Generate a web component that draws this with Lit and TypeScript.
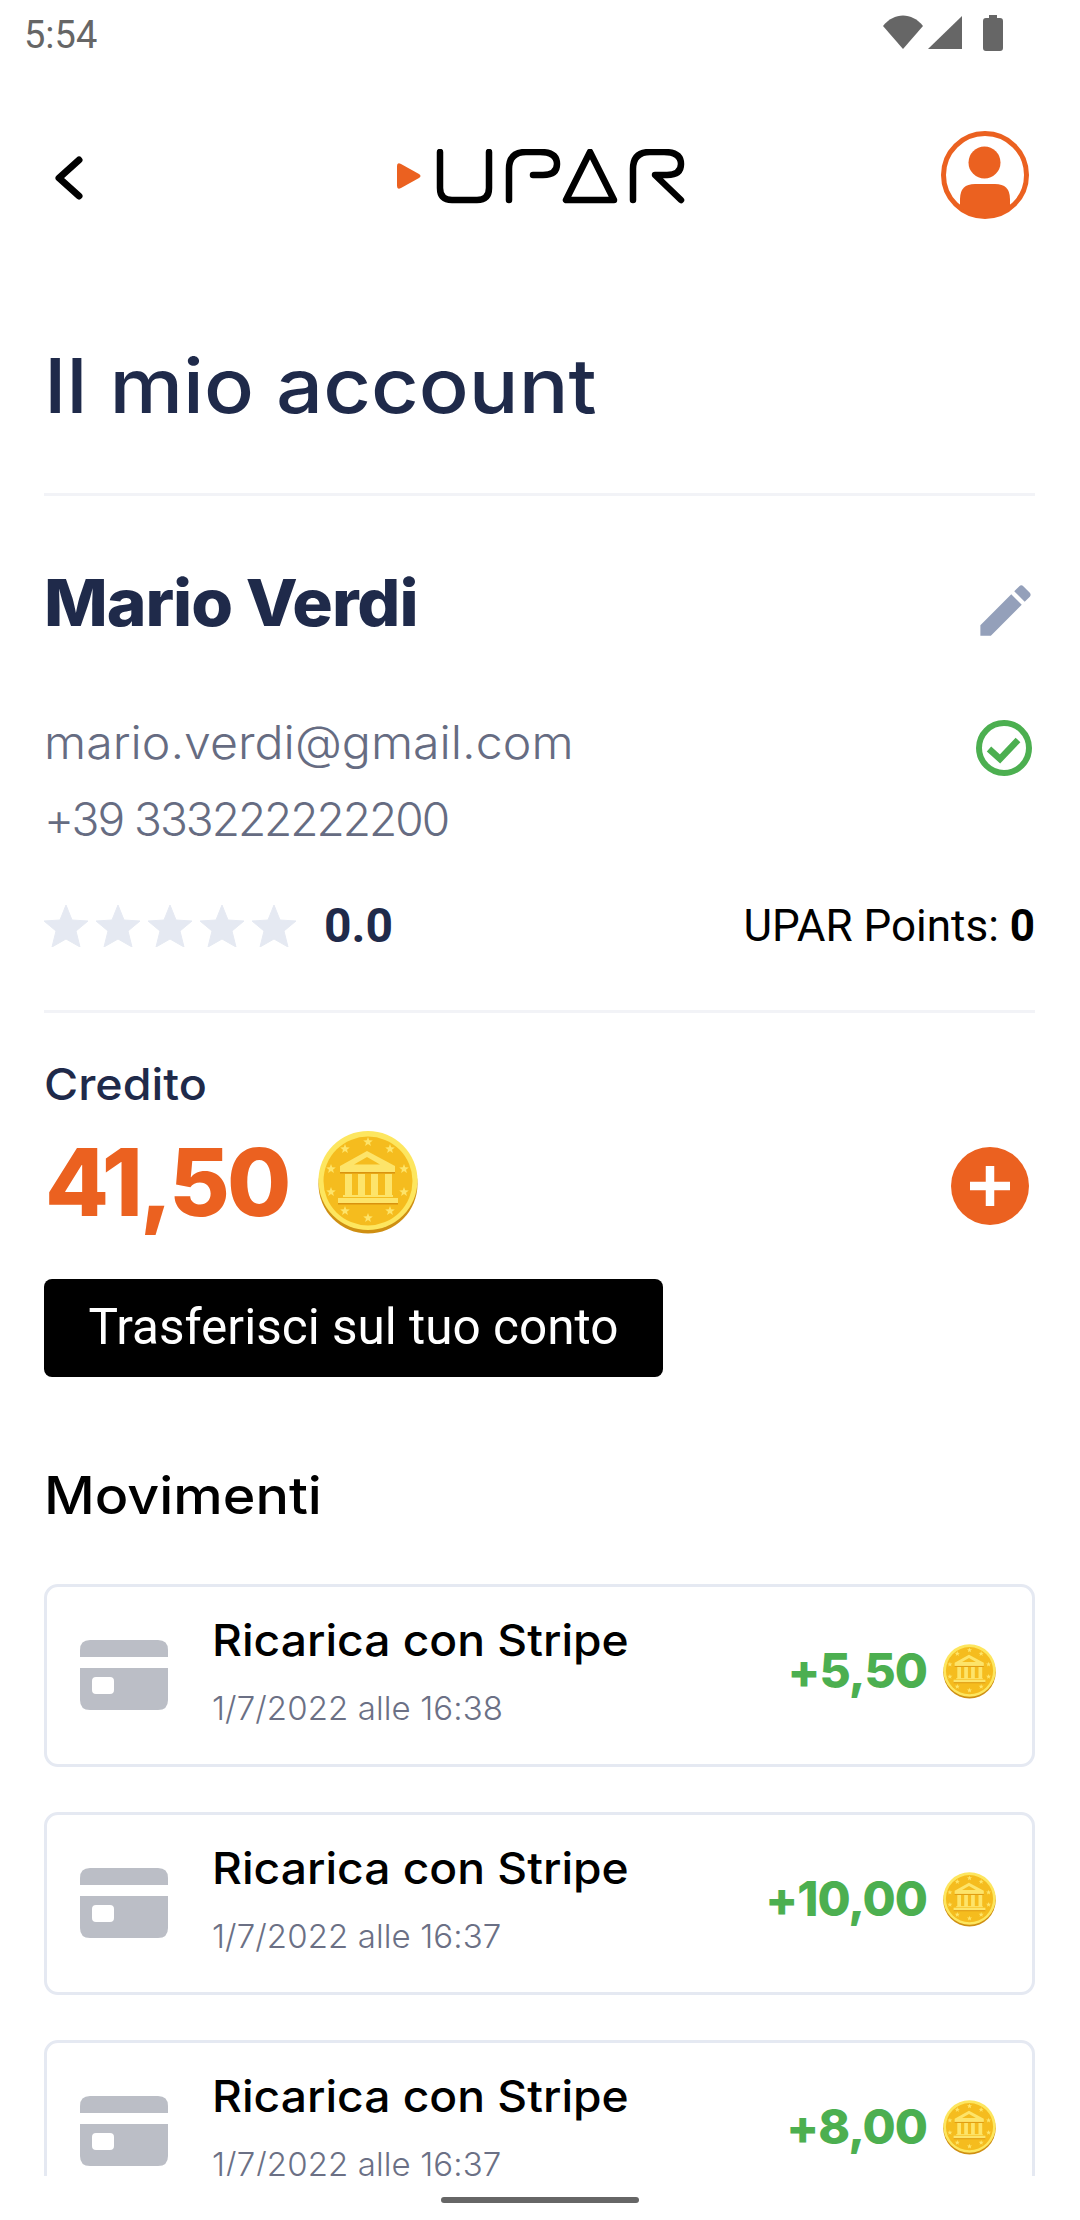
import { LitElement, html, css, svg } from "lit";
import { customElement } from "lit/decorators.js";

const starPts = (cx: number, cy: number, r: number) => {
  const p: string[] = [];
  for (let i = 0; i < 10; i++) {
    const a = -Math.PI / 2 + (i * Math.PI) / 5;
    const q = i % 2 ? r * 0.42 : r;
    p.push(`${(cx + q * Math.cos(a)).toFixed(2)},${(cy + q * Math.sin(a)).toFixed(2)}`);
  }
  return p.join(" ");
};

const coinStars: [number, number][] = [[50, 11], [27, 18], [72, 18], [13, 38], [86, 38], [13, 61], [86, 61], [27, 80], [72, 80], [50, 87]];

const coin = (cls: string) => html`<svg class=${cls} viewBox="0 0 100 103">
  <circle cx="50" cy="53" r="49.5" fill="#cf8f12"></circle>
  <circle cx="50" cy="49.5" r="49.5" fill="#fde65f"></circle>
  <circle cx="50" cy="50" r="44.5" fill="#f5bc1e"></circle>
  ${coinStars.map(([x, y]) => svg`<polygon points=${starPts(x, y, 5)} fill="#fde46a"></polygon>`)}
  <path d="M49 20 L22 35 V41 H77 V35 Z" fill="#fde46a"></path>
  <path d="M49 26 L36 33.5 H62 Z" fill="#f5bc1e"></path>
  <rect x="22" y="41" width="55" height="1.5" fill="#d9920f"></rect>
  <g fill="#fde46a">
    <rect x="27" y="43" width="7" height="22"></rect>
    <rect x="40" y="43" width="7" height="22"></rect>
    <rect x="53" y="43" width="7" height="22"></rect>
    <rect x="67" y="43" width="7" height="22"></rect>
    <rect x="25" y="64" width="50" height="2"></rect>
    <rect x="20" y="67" width="60" height="5"></rect>
  </g>
  <rect x="20" y="72" width="60" height="1.5" fill="#d9920f"></rect>
</svg>`;

interface Move { amount: string; date: string; }

@customElement("app-root")
export class AppRoot extends LitElement {
  static styles = css`
    :host { display: block; width: 1080px; height: 2220px; background: #fff; overflow: hidden; font-family: "Inter", "Liberation Sans", sans-serif; }
    .screen { height: 2176px; overflow: hidden; display: flex; flex-direction: column; }
    .status { height: 60px; flex: none; display: flex; align-items: center; justify-content: space-between; padding: 0 77px 0 24px; box-sizing: border-box; color: #666; }
    .time { font: 400 38px/1 "Roboto", sans-serif; margin-top: 9px; }
    .status-icons { display: block; width: 120px; height: 36px; margin-top: 6px; }
    .header { height: 230px; flex: none; display: flex; align-items: center; justify-content: space-between; padding: 0 51px 0 55px; box-sizing: border-box; position: relative; }
    .chev { width: 28px; height: 44px; display: block; margin-top: 6px; }
    .logo { width: 288px; height: 55px; display: block; position: absolute; left: 397px; top: 89px; }
    .avatar { width: 88px; height: 88px; display: block; }
    .body { padding: 0 45px 0 44px; display: flex; flex-direction: column; flex: none; }
    .wide { display: inline-block; transform-origin: left center; white-space: nowrap; }
    .title { height: 203px; flex: none; font-weight: 500; font-size: 76px; line-height: 190px; color: #1f2a4a; transform: scaleX(1.09); }
    .rule { height: 3px; flex: none; background: #f2f3f7; }
    .name-row { height: 207px; display: flex; justify-content: space-between; align-items: center; flex: none; }
    .name { font-weight: 800; font-size: 65px; line-height: 1; color: #1f2a4a; margin-top: 5px; letter-spacing: -1px; transform: scaleX(1.04); }
    .edit { width: 67px; height: 67px; display: block; margin: 21px -4px 0 0; }
    .contact { height: 77px; display: flex; justify-content: space-between; align-items: center; flex: none; font-size: 46px; font-weight: 300; color: #666c82; }
    .email { transform: scaleX(1.05); }
    .phone { letter-spacing: -2px; }
    .check { width: 56px; height: 56px; display: block; margin: 12px 3px 0 0; }
    .meta { height: 153px; display: flex; align-items: center; flex: none; padding-bottom: 15px; box-sizing: border-box; }
    .stars { display: flex; gap: 8px; }
    .star { width: 44px; height: 42px; display: block; }
    .score { font: 700 48px/1 "Roboto", sans-serif; color: #1f2a4a; margin-left: 28px; }
    .points { font: 400 44px/1 "Roboto", sans-serif; color: #000; margin-left: auto; }
    .points b { font-weight: 700; }
    .credit-label { height: 78px; margin-top: 32px; flex: none; font-weight: 500; font-size: 44px; line-height: 78px; color: #1f2a4a; transform: scaleX(1.06); }
    .credit { height: 118px; display: flex; align-items: center; flex: none; }
    .credit-value { font-weight: 800; font-size: 93px; line-height: 1; color: #eb6120; letter-spacing: -3px; margin-left: 1px; }
    .coin-big { width: 100px; height: 103px; display: block; margin-left: 30px; }
    .plus { width: 78px; height: 78px; display: block; margin: 8px 6px 0 auto; }
    .btn { width: 619px; height: 98px; flex: none; margin-top: 38px; background: #000; color: #fff; border-radius: 8px; display: flex; align-items: center; justify-content: center; font: 400 49.5px/1 "Roboto", sans-serif; }
    .section { height: 207px; flex: none; padding-top: 30px; box-sizing: border-box; display: flex; align-items: center; color: #000; }
    .section span { font-weight: 500; font-size: 52px; line-height: 1; transform: scaleX(1.07); }
    .cards { display: flex; flex-direction: column; gap: 45px; }
    .card { height: 183px; flex: none; box-sizing: border-box; border: 3px solid #e5e9f2; border-radius: 14px; display: flex; align-items: center; padding: 0 36px 0 33px; }
    .card-icon { width: 88px; height: 70px; display: block; flex: none; margin-bottom: 2px; }
    .card-text { margin: 0 0 10px 44px; display: flex; flex-direction: column; flex: 1; }
    .card-title { font-weight: 500; font-size: 44px; line-height: 60px; color: #000; transform: scaleX(1.05); align-self: flex-start; }
    .card-date { font-weight: 300; font-size: 33px; line-height: 48px; margin-top: 14px; color: #6b7085; letter-spacing: 0.1px; }
    .amount { font-weight: 800; font-size: 48px; line-height: 1; color: #4caf50; letter-spacing: -1px; margin-bottom: 10px; }
    .coin-small { width: 53px; height: 55px; display: block; margin: 0 0 8px 16px; flex: none; }
    .home { height: 44px; flex: none; display: flex; justify-content: center; padding-top: 21px; box-sizing: border-box; }
    .home span { display: block; width: 198px; height: 6px; border-radius: 3px; background: #666; }
  `;

  private moves: Move[] = [
    { amount: "+5,50", date: "1/7/2022 alle 16:38" },
    { amount: "+10,00", date: "1/7/2022 alle 16:37" },
    { amount: "+8,00", date: "1/7/2022 alle 16:37" },
  ];

  render() {
    return html`
      <div class="screen">
        <div class="status">
          <span class="time">5:54</span>
          <svg class="status-icons" viewBox="0 0 120 36" fill="#666">
            <path d="M0 11 C11 -3 29 -3 40 11 L20 34 Z"></path>
            <path d="M79 1 V34 H45 Z"></path>
            <path d="M106 0 h8 v3 h3 q3 0 3 3 v27 q0 3 -3 3 h-14 q-3 0 -3 -3 V6 q0 -3 3 -3 h3 Z"></path>
          </svg>
        </div>
        <div class="header">
          <svg class="chev" viewBox="0 0 28 44" fill="none" stroke="#000" stroke-width="7" stroke-linecap="round" stroke-linejoin="round"><path d="M24 4 L4 22 L24 40"></path></svg>
          <svg class="logo" viewBox="0 0 288 55" fill="none" stroke="#000" stroke-width="6.5" stroke-linecap="round" stroke-linejoin="round">
            <path d="M0 17 Q0 13 4 15 L22 25 Q25 27 22 29 L4 39 Q0 41 0 37 Z" fill="#eb6120" stroke="none"></path>
            <path d="M43 3 V39 Q43 51 55 51 H80 Q92 51 92 39 V3"></path>
            <path d="M112 51 V20 Q112 3 129 3 H143 Q160 3 160 15 Q160 26 146 26 H136"></path>
            <path d="M193 3 L169 51 H217 Z"></path>
            <path d="M236 51 V20 Q236 3 253 3 H267 Q284 3 284 15 Q284 26 270 26 H258 L284 51"></path>
          </svg>
          <svg class="avatar" viewBox="0 0 88 88">
            <circle cx="44" cy="44" r="41.5" fill="#fff" stroke="#eb6120" stroke-width="5"></circle>
            <circle cx="43.5" cy="31.5" r="16" fill="#eb6120"></circle>
            <path d="M19 77 V68 Q19 53 34 53 H54 Q69 53 69 68 V77 A41.5 41.5 0 0 1 19 77 Z" fill="#eb6120"></path>
          </svg>
        </div>
        <div class="body">
          <div class="title wide">Il mio account</div>
          <div class="rule"></div>
          <div class="name-row">
            <span class="name wide">Mario Verdi</span>
            <svg class="edit" viewBox="0 0 24 24" fill="#94a0ba"><path d="M3 17.25V21h3.75L17.81 9.94l-3.75-3.75L3 17.25zM20.71 7.04c.39-.39.39-1.02 0-1.41l-2.34-2.34c-.39-.39-1.02-.39-1.41 0l-1.83 1.83 3.75 3.75 1.83-1.83z"></path></svg>
          </div>
          <div class="contact">
            <span class="email wide">mario.verdi@gmail.com</span>
            <svg class="check" viewBox="0 0 56 56" fill="none" stroke="#4caf50" stroke-width="6"><circle cx="28" cy="28" r="25"></circle><path d="M13 29 L24 39 L42 20" stroke-width="6.5"></path></svg>
          </div>
          <div class="contact"><span class="phone">+39 333222222200</span></div>
          <div class="meta">
            <div class="stars">
              ${[0, 1, 2, 3, 4].map(() => html`<svg class="star" viewBox="0 0 44 42"><polygon points="22,0 28,15 44,16 32,26 36,42 22,34 8,42 12,26 0,16 16,15" fill="#e5e9f2" stroke="#e5e9f2" stroke-width="1" stroke-linejoin="round"></polygon></svg>`)}
            </div>
            <span class="score">0.0</span>
            <span class="points">UPAR Points: <b>0</b></span>
          </div>
          <div class="rule"></div>
          <div class="credit-label wide">Credito</div>
          <div class="credit">
            <span class="credit-value">41,50</span>
            ${coin("coin-big")}
            <svg class="plus" viewBox="0 0 78 78"><circle cx="39" cy="39" r="39" fill="#eb6120"></circle><path d="M39 19 V59 M19 39 H59" stroke="#fff" stroke-width="8.5"></path></svg>
          </div>
          <div class="btn">Trasferisci sul tuo conto</div>
          <div class="section"><span class="wide">Movimenti</span></div>
          <div class="cards">
            ${this.moves.map((m) => html`
              <div class="card">
                <svg class="card-icon" viewBox="0 0 88 70" fill="#bbbec6">
                  <path d="M0 17 V10 Q0 0 10 0 H78 Q88 0 88 10 V17 Z"></path>
                  <path fill-rule="evenodd" d="M0 28 H88 V60 Q88 70 78 70 H10 Q0 70 0 60 Z M16 37 Q12 37 12 41 V50 Q12 54 16 54 H30 Q34 54 34 50 V41 Q34 37 30 37 Z"></path>
                </svg>
                <div class="card-text">
                  <span class="card-title wide">Ricarica con Stripe</span>
                  <span class="card-date">${m.date}</span>
                </div>
                <span class="amount">${m.amount}</span>
                ${coin("coin-small")}
              </div>
            `)}
          </div>
        </div>
      </div>
      <div class="home"><span></span></div>
    `;
  }
}
